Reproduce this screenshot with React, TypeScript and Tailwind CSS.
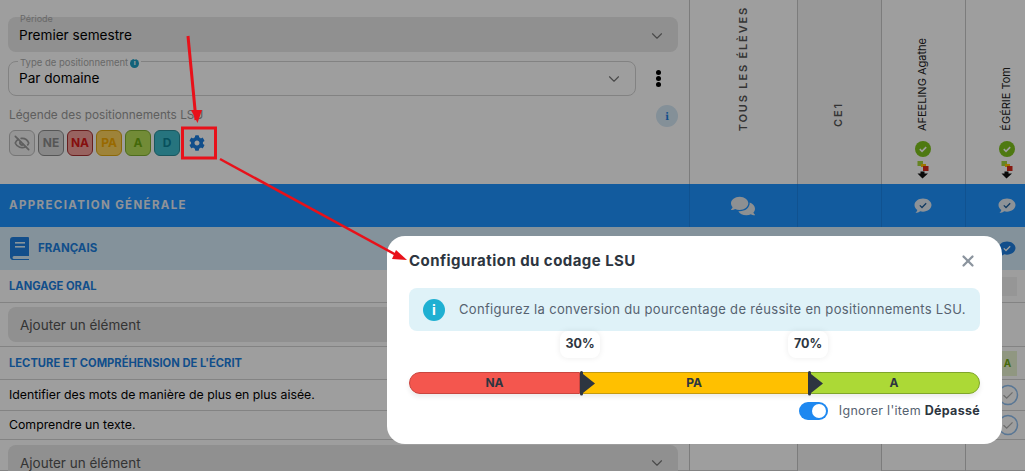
import { FaCog, FaComments } from "react-icons/fa";
import { ChevronDown, EyeOff, X } from "lucide-react";

// the last student column runs past the window edge, the root clips it
const gridCols = "grid grid-cols-[689px_108px_84px_84px_84px]";
const cellLine = "border-l border-[#c9c9c9]";

function BubbleCheck({ fill = "#e4ecf4", tick = "#1a5c9c" }: { fill?: string; tick?: string }) {
  return (
    <svg width="18" height="16" viewBox="0 0 18 16">
      <path d="M9 0.5c4.7 0 8.5 2.9 8.5 6.6s-3.8 6.6-8.5 6.6c-1 0-2-.1-2.9-.4-1.2.9-2.8 1.600-4.600 1.700.9-.8 1.600-1.900 1.800-3C1.600 10.800.5 9.100.5 7.100.5 3.400 4.300.5 9 .5z" fill={fill} />
      <path d="M5.800 7.400l2.200 2.100 4.200-4.200" fill="none" stroke={tick} strokeWidth="1.300" />
    </svg>
  );
}

function GreenCheck() {
  return (
    <svg width="16" height="16" viewBox="0 0 16 16">
      <circle cx="8" cy="8" r="8" fill="#7fc31c" />
      <path d="M4.800 8.200l2.200 2.100 4.200-4.200" fill="none" stroke="#fff" strokeWidth="1.600" />
    </svg>
  );
}

function StairsDown() {
  return (
    <svg width="12" height="18" viewBox="0 0 12 18">
      <rect x="0.500" y="0" width="5.500" height="5" fill="#a5d63a" />
      <rect x="4" y="3" width="5" height="3" fill="#ffc000" />
      <rect x="6" y="5" width="5.500" height="5" fill="#d92a1c" />
      <path d="M3.500 10.500h4v2H11L5.500 17.500 0.500 12.500h3z" fill="#111" />
    </svg>
  );
}

function OutlineCheck() {
  return (
    <svg width="22" height="22" viewBox="0 0 22 22">
      <circle cx="11" cy="11" r="9.500" fill="none" stroke="#8fbff0" strokeWidth="1.500" />
      <path d="M6.500 11.200l3.200 3 5.800-5.800" fill="none" stroke="#b0b0b0" strokeWidth="1.300" />
    </svg>
  );
}

function BookIcon() {
  return (
    <svg width="20" height="23" viewBox="0 0 20 23">
      <path d="M3 0h15a1 1 0 0 1 1 1v18H4a1.500 1.500 0 0 0 0 3h15v1H3.500A3 3 0 0 1 0 20V3a3 3 0 0 1 3-3z" fill="#1d7fe0" />
      <rect x="5" y="5" width="10" height="1.600" fill="#dff0fb" />
      <rect x="5" y="9" width="10" height="1.600" fill="#dff0fb" />
    </svg>
  );
}

function Chip({ label, cls }: { label: string; cls: string }) {
  return (
    <div className={`flex h-[26px] w-[26px] items-center justify-center rounded-md border text-[12px] font-bold ${cls}`}>
      {label}
    </div>
  );
}

function StudentHead({ name }: { name: string }) {
  return (
    <div className={`${cellLine} flex flex-col items-center justify-end pb-[5px]`}>
      <span className="mb-[10px] mr-[2px] text-[11px] text-[#222] [writing-mode:vertical-rl] rotate-180">{name}</span>
      <div className="mr-[2px]">
        <GreenCheck />
      </div>
      <div className="mr-[2px] mt-[4px]">
        <StairsDown />
      </div>
    </div>
  );
}

function Row({ h, children, right }: { h: string; children: React.ReactNode; right?: React.ReactNode }) {
  return (
    <div className={`${gridCols} ${h} border-b border-[#d4d4d4]`}>
      <div className="flex min-w-0 items-center">{children}</div>
      <div className={cellLine} />
      <div className={`${cellLine} bg-[#f6f6f6]`} />
      <div className={cellLine} />
      <div className={`${cellLine} flex items-center justify-center`}>{right}</div>
    </div>
  );
}

function AddInput() {
  return (
    <div className="mx-2 flex h-[35px] w-[670px] items-center justify-between rounded-lg bg-[#e8e8e8] pl-[12px] pr-[12px] pt-[1px] text-[13.5px] text-[#555]">
      Ajouter un élément
      <ChevronDown size={18} strokeWidth={1.5} className="text-[#777]" />
    </div>
  );
}

function Subject({ children }: { children: React.ReactNode }) {
  return <span className="pl-[9px] text-[11.2px] font-bold text-[#1c7fe0]">{children}</span>;
}

function Thumb({ value, left }: { value: string; left: string }) {
  return (
    <div className={`absolute top-[-41px] ${left} flex w-[40px] flex-col items-center`}>
      <div className="flex h-[27px] w-[40px] items-center justify-center rounded-lg bg-white text-[12.5px] font-bold text-[#2d3540] shadow-[0_0_6px_rgba(0,0,0,0.08)]">
        {value}
      </div>
      <svg width="16" height="26" viewBox="0 0 16 26" className="ml-[15px] mt-[13px]">
        <path d="M0 1.500a1.500 1.500 0 0 1 3 0V3l12 9.500L3 22v1a1.500 1.500 0 0 1-3 0z" fill="#2d3540" />
      </svg>
    </div>
  );
}

function Modal() {
  return (
    <div className="absolute left-[387px] top-[236px] h-[208px] w-[615px] rounded-[18px] bg-white px-[22px] pt-[15px] text-[#2d3540]">
      <div className="flex h-[20px] items-center justify-between">
        <h2 className="text-[15px] font-bold tracking-[0.45px]">Configuration du codage LSU</h2>
        <X size={18} strokeWidth={3} className="mr-[3px] text-[#8b949e]" />
      </div>
      <div className="mt-[17px] flex h-[43px] items-center rounded-lg bg-[#dff2f8] pl-[14px]">
        <div className="flex h-[22px] w-[22px] items-center justify-center rounded-full bg-[#1fb0d2] text-[14px] font-bold text-white">i</div>
        <p className="ml-[14px] text-[13px] tracking-[0.33px] text-[#566270]">
          Configurez la conversion du pourcentage de réussite en positionnements LSU.
        </p>
      </div>
      <div className="relative mt-[41px] flex h-[22px] w-[571px] rounded-full text-[12px] font-bold shadow-[0_3px_5px_rgba(0,0,0,0.08)]">
        <div className="flex w-[171px] items-center justify-center rounded-l-full border border-[#c9453f] bg-[#f4564e]">NA</div>
        <div className="flex w-[228px] items-center justify-center border-y border-[#c49a10] bg-[#ffc000]">PA</div>
        <div className="flex w-[172px] items-center justify-center rounded-r-full border border-[#7fa52b] bg-[#acd936]">A</div>
        <Thumb value="30%" left="left-[151px]" />
        <Thumb value="70%" left="left-[379px]" />
      </div>
      <div className="mt-[8px] flex items-center justify-end">
        <div className="flex h-[18px] w-[29px] items-center justify-end rounded-full bg-[#1e88f0] pr-[2px]">
          <div className="h-[14px] w-[14px] rounded-full bg-white" />
        </div>
        <span className="ml-[11px] text-[12.5px] tracking-[0.3px] text-[#566270]">
          Ignorer l'item <b className="text-[#2d3540]">Dépassé</b>
        </span>
      </div>
    </div>
  );
}

function Arrows() {
  return (
    <svg width="1025" height="471" className="pointer-events-none absolute left-0 top-0">
      <rect x="182.500" y="128" width="33" height="30" fill="none" stroke="#e8111a" strokeWidth="3" />
      <path d="M188 36l8 84" stroke="#e8111a" strokeWidth="3" />
      <path d="M191 110l11 0-4.500 13z" fill="#e8111a" />
      <path d="M220 159l180 98" stroke="#e8111a" strokeWidth="2.500" />
      <path d="M396 250l11 10-15-1z" fill="#e8111a" />
    </svg>
  );
}

export default function App() {
  return (
    <div className="relative h-[471px] w-[1025px] overflow-hidden bg-white font-['Inter',sans-serif] text-black">
      <div className={`${gridCols} h-[184px]`}>
        <div className="relative px-2 pt-[17px]">
          <div className="relative flex h-[35px] w-[670px] items-center justify-between rounded-lg bg-[#e8e8e8] pl-[11px] pr-[12px] pt-[2px] text-[13.6px]">
            Premier semestre
            <ChevronDown size={18} strokeWidth={1.5} className="text-[#777]" />
            <span className="absolute left-[12px] top-[-5px] text-[9px] text-[#aaa]">Période</span>
          </div>
          <div className="mt-[9px] flex items-center">
            <div className="relative flex h-[35px] w-[628px] items-center justify-between rounded-lg border border-[#d2d2d2] pl-[10px] pr-[12px] text-[13.6px]">
              Par domaine
              <ChevronDown size={18} strokeWidth={1.5} className="text-[#777]" />
              <span className="absolute left-[9px] top-[-6px] flex items-center gap-[2px] bg-white px-[2px] text-[9.5px] text-[#aaa]">
                Type de positionnement
                <span className="flex h-[9px] w-[9px] items-center justify-center rounded-full bg-[#1f9fc4] text-[7px] font-bold text-white">i</span>
              </span>
            </div>
            <div className="ml-[20px] flex flex-col gap-[1px]">
              <i className="h-[5px] w-[5px] rounded-full bg-black" />
              <i className="h-[5px] w-[5px] rounded-full bg-black" />
              <i className="h-[5px] w-[5px] rounded-full bg-black" />
            </div>
          </div>
          <div className="mt-[9px] flex h-[22px] w-[670px] items-center justify-between pl-[1px]">
            <span className="text-[11.8px] text-[#999]">Légende des positionnements LSU</span>
            <div className="flex h-[22px] w-[22px] items-center justify-center rounded-full bg-[#d5e8f6] font-serif text-[12px] font-bold text-[#1c7fe0]">i</div>
          </div>
          <div className="mt-[3px] flex items-center gap-[3px] pl-[1px]">
            <div className="flex h-[26px] w-[26px] items-center justify-center rounded-md border border-[#bdbdbd] bg-[#f0f0f0]">
              <EyeOff size={16} strokeWidth={2.5} className="text-[#999]" />
            </div>
            <Chip label="NE" cls="border-[#8c8c8c] bg-[#dcdcdc] text-[#8c8c8c]" />
            <Chip label="NA" cls="border-[#a83030] bg-[#f6a09c] text-[#d81818]" />
            <Chip label="PA" cls="border-[#e0a810] bg-[#ffd45c] text-[#f5aa00]" />
            <Chip label="A" cls="border-[#7fae30] bg-[#b8e05a] text-[#6faa10]" />
            <Chip label="D" cls="border-[#2a8c98] bg-[#3ebccb] text-[#0c8296]" />
            <FaCog size={16} className="ml-[6px] text-[#1c7fe0]" />
          </div>
        </div>
        <div className={`${cellLine} flex flex-col items-center justify-end pb-[53px]`}>
          <span className="text-[11px] font-semibold tracking-[1.85px] text-[#555] [writing-mode:vertical-rl] rotate-180">TOUS LES ÉLÈVES</span>
        </div>
        <div className={`${cellLine} flex flex-col items-center justify-end bg-[#f6f6f6] pb-[57px] pr-[2px]`}>
          <span className="text-[11px] font-semibold tracking-[1.85px] text-[#555] [writing-mode:vertical-rl] rotate-180">CE1</span>
        </div>
        <StudentHead name="AFEELING Agathe" />
        <StudentHead name="ÉGÉRIE Tom" />
      </div>

      <div className={`${gridCols} h-[43px] bg-[#1d93ff] text-white`}>
        <div className="flex items-center pl-[9px] text-[11.5px] font-bold tracking-[1.35px] text-[#e8eef5]">APPRECIATION GÉNÉRALE</div>
        <div className="flex items-center justify-center border-l border-[#1a85e8] pr-[2px]">
          <FaComments size={24} className="text-[#e4e8ec]" />
        </div>
        <div className="border-l border-[#1a85e8]" />
        <div className="flex items-center justify-center border-l border-[#1a85e8] pr-[2px]">
          <BubbleCheck />
        </div>
        <div className="flex items-center justify-center border-l border-[#1a85e8] pr-[2px]">
          <BubbleCheck />
        </div>
      </div>

      <div className={`${gridCols} h-[43px] bg-[#d6ecfa]`}>
        <div className="flex items-center pl-[10px]">
          <BookIcon />
          <span className="ml-[8px] text-[11.5px] font-bold text-[#1c7fe0]">FRANÇAIS</span>
        </div>
        <div />
        <div />
        <div />
        <div className="flex items-center justify-center">
          <BubbleCheck fill="#1d7fe0" tick="#fff" />
        </div>
      </div>

      <Row h="h-[33px]" right={<div className="h-[19px] w-[18px] bg-[#f3f3f3]" />}>
        <Subject>LANGAGE ORAL</Subject>
      </Row>
      <Row h="h-[44px]">
        <AddInput />
      </Row>
      <Row h="h-[33px]" right={<div className="flex h-[25px] w-[18px] items-center justify-center bg-[#e9f4d0] text-[10px] font-bold text-[#6faa10]">A</div>}>
        <Subject>LECTURE ET COMPRÉHENSION DE L'ÉCRIT</Subject>
      </Row>
      <Row h="h-[31px]" right={<OutlineCheck />}>
        <span className="pl-[9px] text-[12.3px]">Identifier des mots de manière de plus en plus aisée.</span>
      </Row>
      <Row h="h-[29px]" right={<OutlineCheck />}>
        <span className="pl-[9px] text-[12.3px]">Comprendre un texte.</span>
      </Row>
      <Row h="h-[31px]">
        <div className="self-start pt-[5px]">
          <AddInput />
        </div>
      </Row>

      <div className="absolute inset-0 bg-black/[0.38]" />
      <Modal />
      <Arrows />
    </div>
  );
}
